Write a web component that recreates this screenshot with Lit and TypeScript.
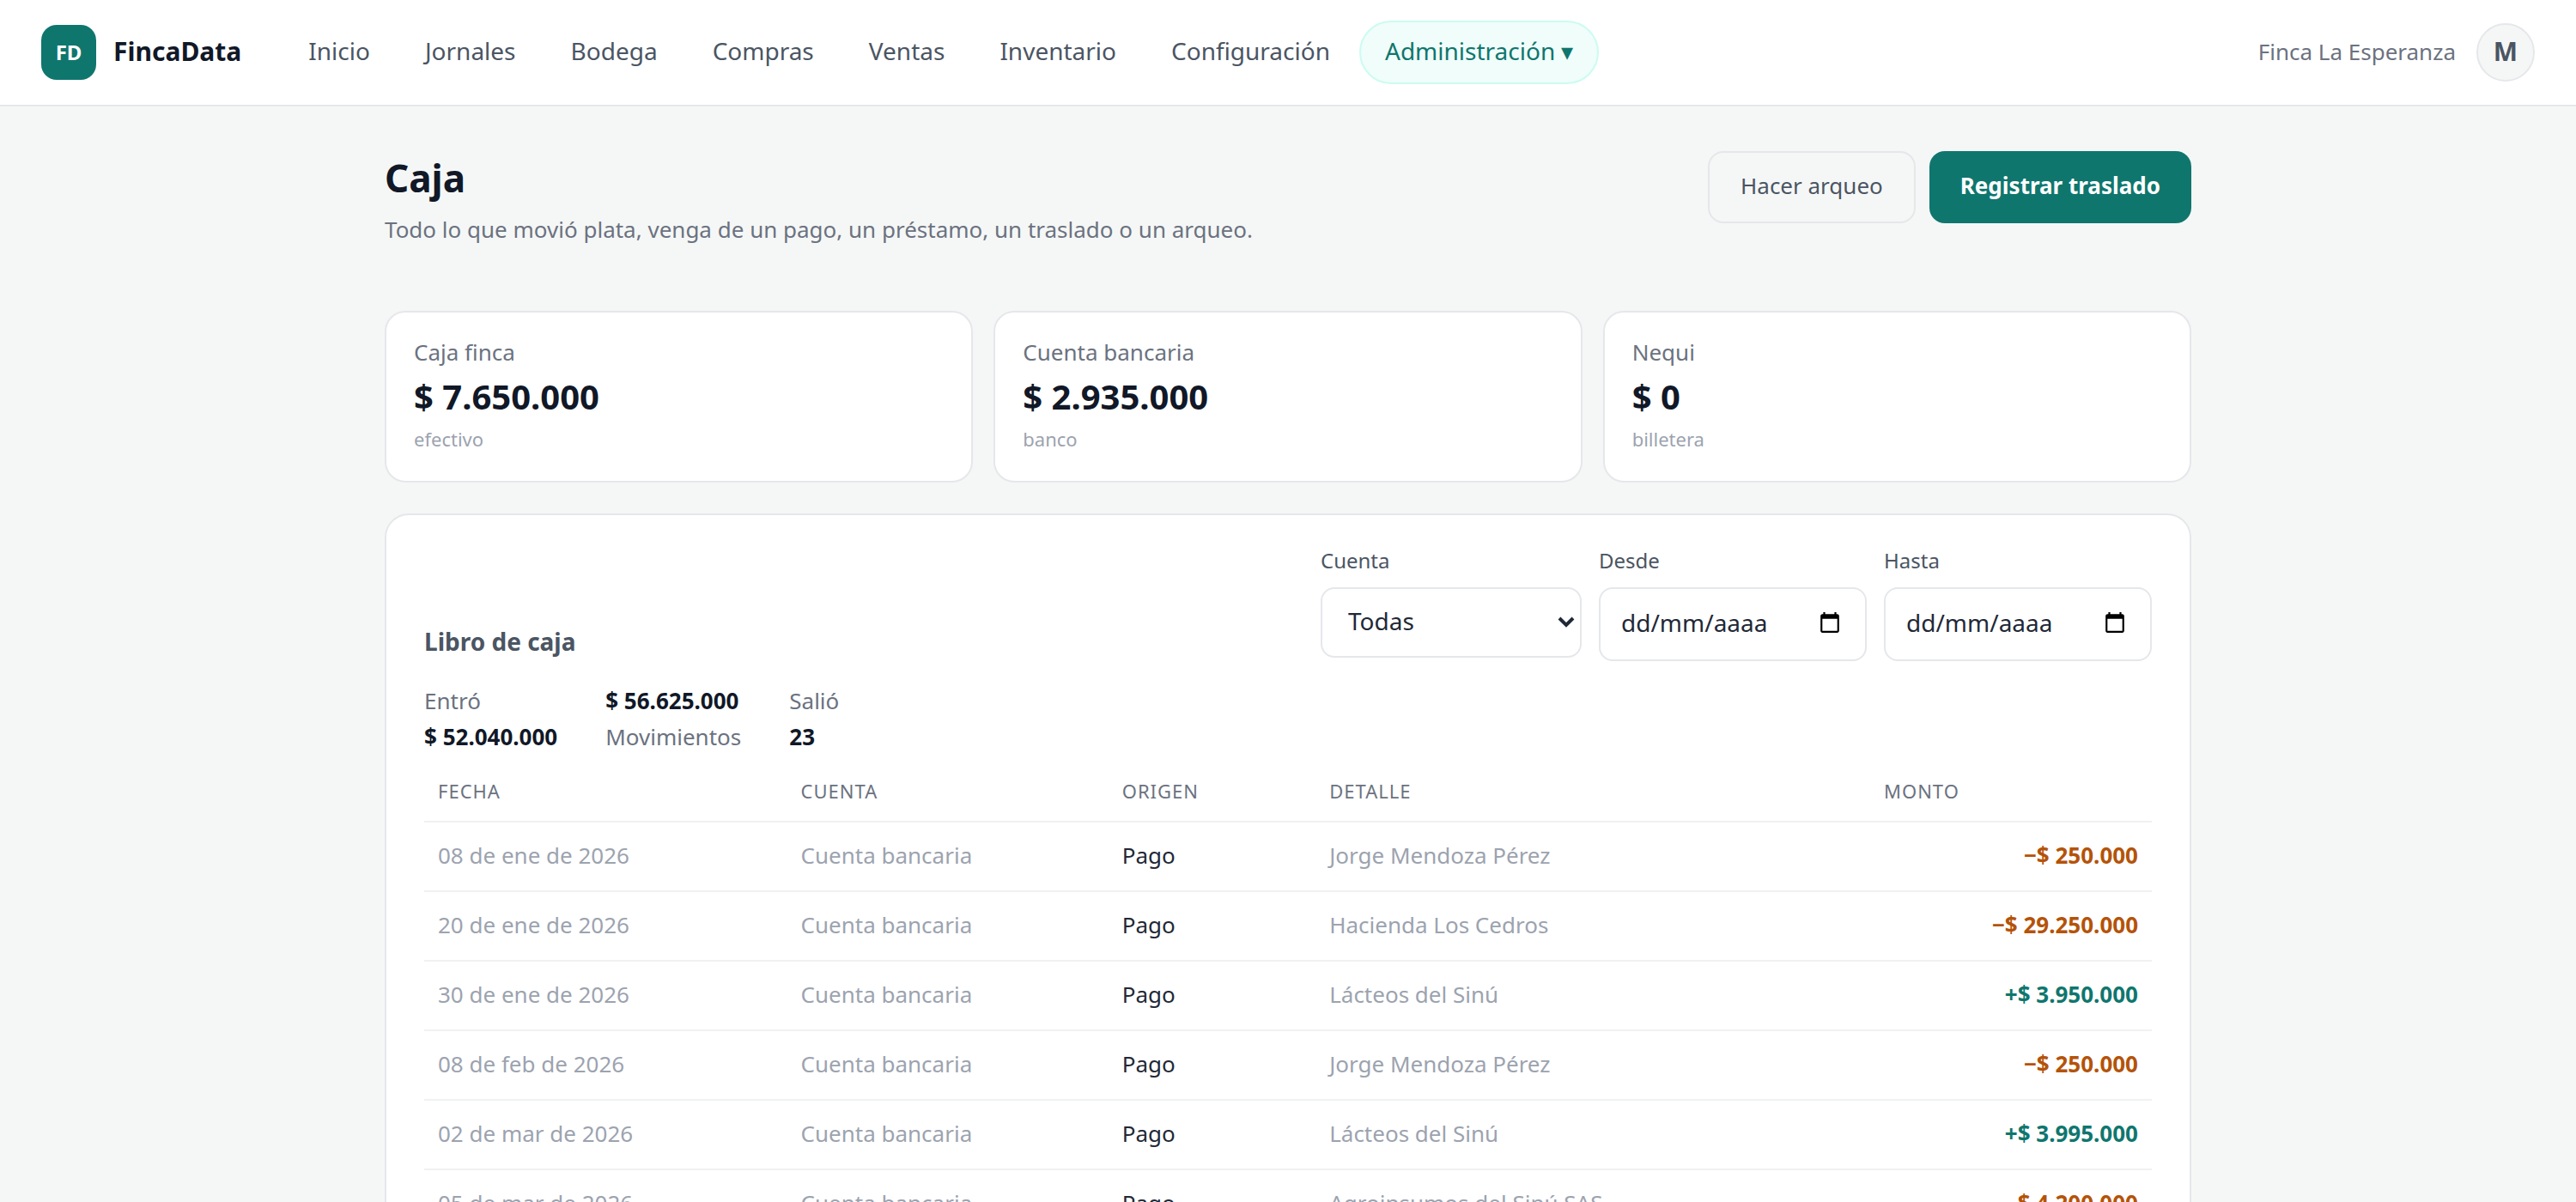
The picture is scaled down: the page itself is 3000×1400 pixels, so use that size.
import { LitElement, html, css } from "lit";
import { customElement } from "lit/decorators.js";

type Account = { name: string; balance: string; kind: string };
type Movement = { date: string; account: string; source: string; detail: string; amount: string };

const SECTIONS = ["Inicio", "Jornales", "Bodega", "Compras", "Ventas", "Inventario", "Configuración"];

const ACCOUNTS: Account[] = [
  { name: "Caja finca", balance: "$ 7.650.000", kind: "efectivo" },
  { name: "Cuenta bancaria", balance: "$ 2.935.000", kind: "banco" },
  { name: "Nequi", balance: "$ 0", kind: "billetera" },
];

const BANK = "Cuenta bancaria";
const MOVEMENTS: Movement[] = [
  { date: "08 de ene de 2026", account: BANK, source: "Pago", detail: "Jorge Mendoza Pérez", amount: "−$ 250.000" },
  { date: "20 de ene de 2026", account: BANK, source: "Pago", detail: "Hacienda Los Cedros", amount: "−$ 29.250.000" },
  { date: "30 de ene de 2026", account: BANK, source: "Pago", detail: "Lácteos del Sinú", amount: "+$ 3.950.000" },
  { date: "08 de feb de 2026", account: BANK, source: "Pago", detail: "Jorge Mendoza Pérez", amount: "−$ 250.000" },
  { date: "02 de mar de 2026", account: BANK, source: "Pago", detail: "Lácteos del Sinú", amount: "+$ 3.995.000" },
  { date: "05 de mar de 2026", account: BANK, source: "Pago", detail: "Agroinsumos del Sinú SAS", amount: "−$ 4.200.000" },
];

@customElement("app-header")
export class AppHeader extends LitElement {
  static styles = css`
    :host { display: block; }
    .bar {
      display: flex;
      align-items: center;
      box-sizing: border-box;
      padding: 24px 48px;
      background: #ffffff;
      border-bottom: 2px solid #e5e7eb;
    }
    .brand { display: flex; align-items: center; gap: 20px; color: #111827; text-decoration: none; font-size: 30px; font-weight: 700; }
    .name { padding-bottom: 4px; }
    .logo {
      display: grid;
      place-items: center;
      box-sizing: border-box;
      width: 64px;
      height: 64px;
      padding-bottom: 2px;
      border-radius: 18px;
      background: #0f766e;
      color: #ffffff;
      font-size: 24px;
    }
    .nav { display: flex; align-items: center; gap: 4px; margin-left: 48px; }
    .link {
      box-sizing: border-box;
      padding: 10px 28px 14px;
      border: 2px solid transparent;
      border-radius: 999px;
      background: none;
      color: #4b5563;
      font: inherit;
      font-size: 28px;
      line-height: 46px;
      text-decoration: none;
      cursor: pointer;
    }
    .current { background: #f0fdfa; border-color: #ccfbf1; color: #0f766e; }
    .user { display: flex; align-items: center; gap: 24px; margin-left: auto; color: #6b7280; font-size: 26px; }
    .farm { padding-bottom: 2px; }
    .avatar {
      box-sizing: border-box;
      width: 68px;
      height: 68px;
      padding: 0 0 4px;
      border: 2px solid #e5e7eb;
      border-radius: 50%;
      background: #f5f7f6;
      color: #4b5563;
      font: inherit;
      font-size: 30px;
      font-weight: 700;
    }
  `;

  render() {
    return html`
      <header class="bar">
        <a class="brand" href="#inicio"><span class="logo">FD</span><span class="name">FincaData</span></a>
        <nav class="nav">
          ${SECTIONS.map((s) => html`<a class="link" href="#${s.toLowerCase()}">${s}</a>`)}
          <button class="link current" type="button">Administración ▾</button>
        </nav>
        <div class="user">
          <span class="farm">Finca La Esperanza</span>
          <button class="avatar" type="button">M</button>
        </div>
      </header>
    `;
  }
}

@customElement("account-card")
export class AccountCard extends LitElement {
  static properties = { account: { attribute: false } };
  declare account: Account;

  static styles = css`
    :host { display: block; }
    .card {
      box-sizing: border-box;
      padding: 25px 32px 31px;
      border: 2px solid #e5e7eb;
      border-radius: 24px;
      background: #ffffff;
    }
    .name { color: #6b7280; font-size: 26px; line-height: 42px; }
    .balance { color: #111827; font-size: 40px; font-weight: 700; line-height: 62px; }
    .kind { color: #9ca3af; font-size: 22px; line-height: 36px; }
  `;

  render() {
    return html`
      <article class="card">
        <div class="name">${this.account.name}</div>
        <div class="balance">${this.account.balance}</div>
        <div class="kind">${this.account.kind}</div>
      </article>
    `;
  }
}

@customElement("cash-ledger")
export class CashLedger extends LitElement {
  static styles = css`
    :host { display: block; }
    .panel { padding: 34px 44px 44px; border: 2px solid #e5e7eb; border-radius: 28px; background: #ffffff; }
    .head { display: flex; justify-content: space-between; align-items: flex-end; }
    .title { margin: 0; color: #4b5563; font-size: 28px; font-weight: 700; line-height: 46px; }
    .filters { display: flex; align-items: flex-start; gap: 20px; }
    .field { display: flex; flex-direction: column; gap: 12px; }
    .label { color: #4b5563; font-size: 24px; line-height: 38px; }
    .box {
      display: grid;
      align-items: center;
      box-sizing: border-box;
      width: 312px;
      border: 2px solid #e5e7eb;
      border-radius: 16px;
      background: #ffffff;
    }
    .box.narrow { width: 304px; }
    .box > * { grid-area: 1 / 1; }
    .control {
      box-sizing: border-box;
      width: 100%;
      min-width: 0;
      height: 82px;
      padding: 0 24px 4px;
      border: 0;
      border-radius: 14px;
      background: none;
      color: #1f2937;
      font: inherit;
      font-size: 28px;
      appearance: none;
    }
    .control::placeholder { color: #1f2937; opacity: 1; }
    .select { height: 78px; padding: 0 30px 4px; }
    .arrow { justify-self: end; width: 20px; height: 14px; margin-right: 6px; pointer-events: none; }
    .picker { justify-self: end; display: grid; margin: 0 28px 4px 0; padding: 0; border: 0; background: none; }
    .calendar { width: 26px; height: 26px; }
    .totals {
      display: grid;
      grid-template-columns: repeat(3, max-content);
      column-gap: 56px;
      margin: 25px 0 15px;
      color: #6b7280;
      font-size: 26px;
      line-height: 42px;
    }
    .totals dt, .totals dd { margin: 0; }
    .totals dd { color: #111827; font-weight: 700; }
    .table { width: 100%; border-collapse: collapse; table-layout: fixed; font-size: 26px; line-height: 41px; }
    .table th, .table td { padding: 18px 16px 20px; border-bottom: 2px solid #f0f1f1; text-align: left; color: #9ca3af; }
    .table th { padding: 9px 16px 17px; color: #6b7280; font-size: 22px; font-weight: 400; line-height: 36px; letter-spacing: 1px; text-transform: uppercase; }
    .table .source { color: #1f2937; }
    .table .amount { color: #0f766e; font-weight: 700; text-align: right; }
    .table .out { color: #b45309; }
    .c1 { width: 21%; }
    .c2 { width: 18.6%; }
    .c3 { width: 12%; }
    .c4 { width: 32.1%; }
    .c5 { width: 16.3%; }
  `;

  private dateField(id: string, label: string) {
    return html`
      <div class="field">
        <label class="label" for=${id}>${label}</label>
        <div class="box">
          <input class="control" id=${id} type="text" placeholder="dd/mm/aaaa" />
          <button class="picker" type="button" aria-label="Abrir calendario">
            <svg class="calendar" viewBox="0 0 24 24" aria-hidden="true">
              <path d="M20 3h-1V1h-2v2H7V1H5v2H4c-1.1 0-2 .9-2 2v16c0 1.1.9 2 2 2h16c1.1 0 2-.9 2-2V5c0-1.1-.9-2-2-2zm0 18H4V8h16v13z" />
            </svg>
          </button>
        </div>
      </div>
    `;
  }

  render() {
    return html`
      <section class="panel">
        <div class="head">
          <h2 class="title">Libro de caja</h2>
          <div class="filters">
            <div class="field">
              <label class="label" for="cuenta">Cuenta</label>
              <div class="box narrow">
                <select class="control select" id="cuenta">
                  <option>Todas</option>
                  ${ACCOUNTS.map((a) => html`<option>${a.name}</option>`)}
                </select>
                <svg class="arrow" viewBox="0 0 20 14" aria-hidden="true">
                  <path d="M2 2l8 8 8-8" fill="none" stroke="#1f2937" stroke-width="4" />
                </svg>
              </div>
            </div>
            ${this.dateField("desde", "Desde")} ${this.dateField("hasta", "Hasta")}
          </div>
        </div>
        <dl class="totals">
          <dt>Entró</dt>
          <dd>$ 56.625.000</dd>
          <dt>Salió</dt>
          <dd>$ 52.040.000</dd>
          <dt>Movimientos</dt>
          <dd>23</dd>
        </dl>
        <table class="table">
          <colgroup><col class="c1" /><col class="c2" /><col class="c3" /><col class="c4" /><col class="c5" /></colgroup>
          <thead>
            <tr><th>Fecha</th><th>Cuenta</th><th>Origen</th><th>Detalle</th><th>Monto</th></tr>
          </thead>
          <tbody>
            ${MOVEMENTS.map(
              (m) => html`<tr>
                <td>${m.date}</td>
                <td>${m.account}</td>
                <td class="source">${m.source}</td>
                <td>${m.detail}</td>
                <td class="amount ${m.amount.startsWith("+") ? "" : "out"}">${m.amount}</td>
              </tr>`
            )}
          </tbody>
        </table>
      </section>
    `;
  }
}

@customElement("app-root")
export class AppRoot extends LitElement {
  static styles = css`
    :host {
      display: block;
      height: 100vh;
      overflow: hidden;
      background: #f5f7f6;
      color: #1f2937;
      font-family: "Noto Sans", sans-serif;
    }
    .main { box-sizing: border-box; max-width: 2200px; margin: 0 auto; padding: 52px 48px; }
    .head { display: flex; justify-content: space-between; align-items: flex-start; margin-bottom: 74px; }
    .title { margin: 0; color: #111827; font-size: 44px; font-weight: 700; line-height: 62px; }
    .lead { margin: 8px 0 0; color: #6b7280; font-size: 26px; line-height: 42px; }
    .actions { display: flex; gap: 16px; }
    .button {
      box-sizing: border-box;
      padding: 17px 36px 21px;
      border: 2px solid #e5e7eb;
      border-radius: 18px;
      background: transparent;
      color: #4b5563;
      font: inherit;
      font-size: 26px;
      line-height: 42px;
      cursor: pointer;
    }
    .primary { padding: 19px 36px 23px; border: 0; background: #0f766e; color: #ffffff; font-weight: 700; }
    .accounts { display: grid; grid-template-columns: repeat(3, 1fr); gap: 24px; margin-bottom: 36px; }
  `;

  render() {
    return html`
      <app-header></app-header>
      <main class="main">
        <div class="head">
          <div>
            <h1 class="title">Caja</h1>
            <p class="lead">Todo lo que movió plata, venga de un pago, un préstamo, un traslado o un arqueo.</p>
          </div>
          <div class="actions">
            <button class="button" type="button">Hacer arqueo</button>
            <button class="button primary" type="button">Registrar traslado</button>
          </div>
        </div>
        <div class="accounts">
          ${ACCOUNTS.map((a) => html`<account-card .account=${a}></account-card>`)}
        </div>
        <cash-ledger></cash-ledger>
      </main>
    `;
  }
}
